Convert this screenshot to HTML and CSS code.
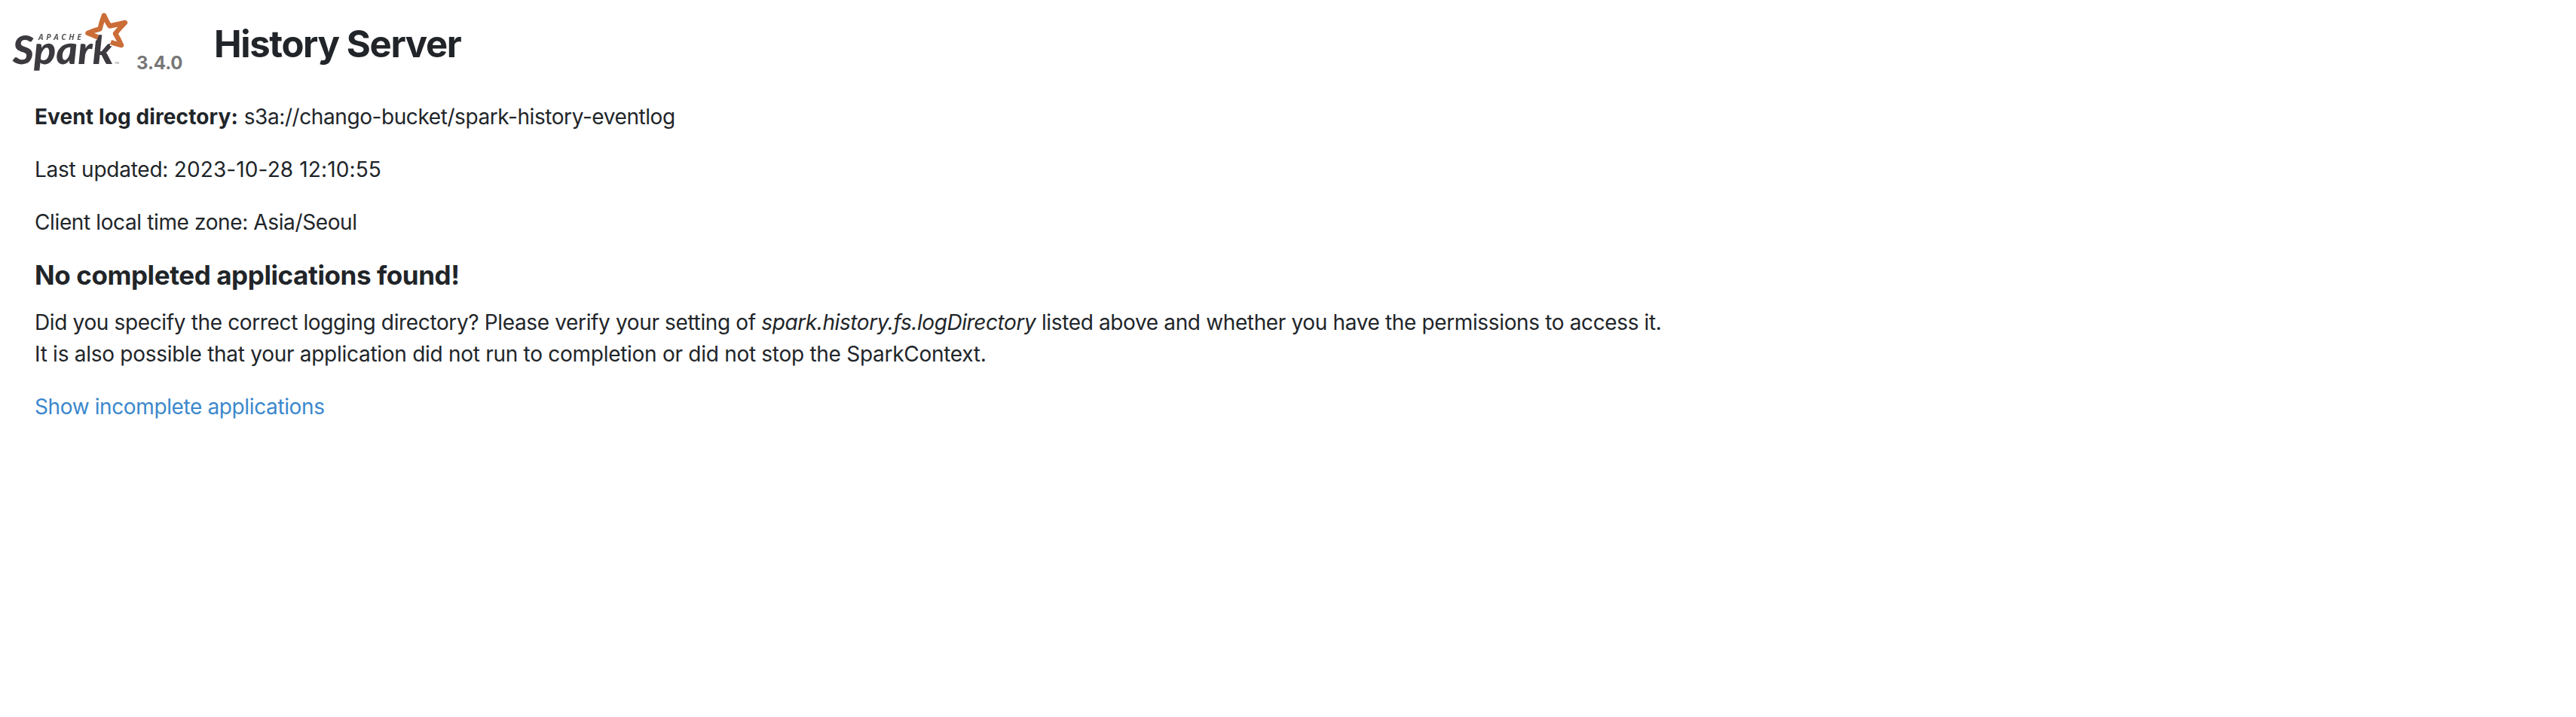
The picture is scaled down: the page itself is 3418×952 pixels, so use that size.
FILE: index.html
```html
<!DOCTYPE html>
<html lang="en">
<head>
<meta charset="utf-8">
<title>History Server</title>
<link rel="stylesheet" href="styles.css">
</head>
<body>
<header class="header">
  <a class="brand" href="#">
    <svg class="logo" width="172" height="100" viewBox="0 0 172 100" role="img" aria-label="Apache Spark">
      <text class="logo-word" transform="translate(17 85) skewX(1.5)" textLength="134" lengthAdjust="spacingAndGlyphs">Spark</text>
      <path class="logo-star-gap" d="M130 49L116 44M147 56L161 60"/>
      <path class="logo-star" d="M130 49.500Q122 46 116.500 44Q125 40 132.500 38.500Q135 28 138 20.500Q141 28 145.500 34.500Q156 32.500 166 30Q159 37 153 44.500Q158 53 161 60Q154 58.500 147 56"/>
      <text class="logo-apache" x="51" y="52.500" textLength="57">APACHE</text>
      <text class="logo-tm" x="152" y="85">TM</text>
    </svg>
    <span class="version">3.4.0</span>
  </a>
  <h3 class="title">History Server</h3>
</header>
<main class="content">
  <p class="line"><strong class="label">Event log directory:</strong> <span class="path">s3a://chango-bucket/spark-history-eventlog</span></p>
  <p class="line"><span class="updated">Last updated: </span><span class="time">2023-10-28 12:10:55</span></p>
  <p class="line zone">Client local time zone: Asia/Seoul</p>
  <h4 class="subtitle">No completed applications found!</h4>
  <p class="line hint">Did you specify the correct logging directory? Please verify your setting of <em class="setting">spark.history.fs.logDirectory</em> listed above and whether you have the permissions to access it.<br><span class="hint-more">It is also possible that your application did not run to completion or did not stop the SparkContext.</span></p>
  <a class="link" href="#">Show incomplete applications</a>
</main>
</body>
</html>
```
FILE: styles.css
```css
body { margin: 0; background: #fff; color: #212529; font: 28px/42px Inter, "Liberation Sans", sans-serif; }
.header { display: flex; height: 118px; }
.brand { display: flex; width: 284px; color: #777; text-decoration: none; }
.logo { flex: none; overflow: visible; filter: blur(0.4px); }
.logo-word { font: italic 900 52px Lato, sans-serif; fill: #3c3a3e; }
.logo-star-gap { fill: none; stroke: #fff; stroke-width: 10; }
.logo-star { fill: none; stroke: #cb6d37; stroke-width: 6.5; stroke-linejoin: round; }
.logo-apache { font: italic 700 10.5px "Open Sans", sans-serif; fill: #555; }
.logo-tm { font: 4px Inter, sans-serif; fill: #777; }
.version { margin: 63px 0 0 9px; font-size: 24px; font-weight: 700; letter-spacing: -0.1px; }
.title { margin: 29px 0 0; font-size: 49px; line-height: 59px; font-weight: 700; letter-spacing: -1.35px; }
.content { padding: 16px 46px 0; }
.line { margin: 0 0 28px; }
.label { letter-spacing: 0.11px; }
.path { letter-spacing: -0.42px; }
.updated { letter-spacing: -0.25px; }
.time { letter-spacing: 0.12px; }
.zone { letter-spacing: -0.38px; }
.subtitle { margin: 0 0 21px; font-size: 35px; line-height: 42px; font-weight: 700; letter-spacing: -0.41px; }
.hint { letter-spacing: -0.36px; }
.setting { letter-spacing: -0.41px; }
.hint-more { letter-spacing: -0.28px; }
.link { color: #3b88cc; text-decoration: none; letter-spacing: -0.38px; }
```
